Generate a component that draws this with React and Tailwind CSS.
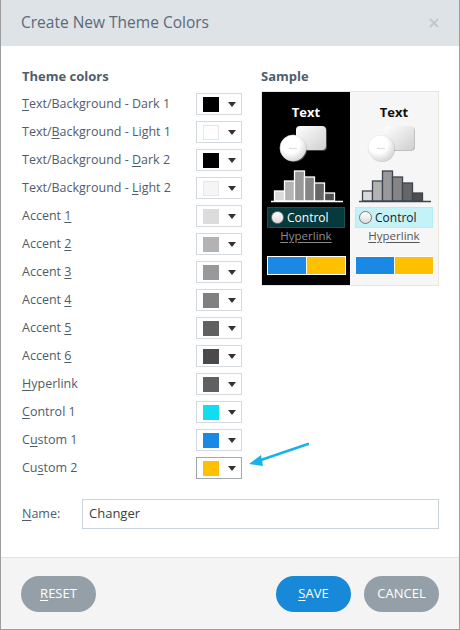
import React from 'react';

const font = { fontFamily: '"Open Sans", "Noto Sans", sans-serif' };

// label parts: [before, underlined, after]
const rows = [
  { label: ['', 'T', 'ext/Background - Dark 1'], color: '#000000' },
  { label: ['Text/', 'B', 'ackground - Light 1'], color: '#ffffff', edge: true },
  { label: ['Text/Background - ', 'D', 'ark 2'], color: '#000000' },
  { label: ['Text/Background - ', 'L', 'ight 2'], color: '#f5f5f5', edge: true },
  { label: ['Accent ', '1', ''], color: '#dcdcdc' },
  { label: ['Accent ', '2', ''], color: '#b3b3b3' },
  { label: ['Accent ', '3', ''], color: '#999999' },
  { label: ['Accent ', '4', ''], color: '#808080' },
  { label: ['Accent ', '5', ''], color: '#606060' },
  { label: ['Accent ', '6', ''], color: '#4a4a4a' },
  { label: ['', 'H', 'yperlink'], color: '#606060' },
  { label: ['', 'C', 'ontrol 1'], color: '#11dcf0' },
  { label: ['C', 'u', 'stom 1'], color: '#1a89e5' },
  { label: ['Cu', 's', 'tom 2'], color: '#ffc000', active: true },
];

const bars = [
  { h: 10, fill: '#d9d9d9' },
  { h: 20, fill: '#b3b3b3' },
  { h: 30, fill: '#999999' },
  { h: 24, fill: '#858585' },
  { h: 18, fill: '#666666' },
  { h: 8, fill: '#4d4d4d' },
];

function ColorPicker({ color, edge, active }) {
  return (
    <div
      className={`flex h-[22px] w-[46px] items-center bg-white pl-[6px] pr-[5px] border ${
        active ? 'border-[#a3a8ad]' : 'border-[#d3d9de]'
      }`}
    >
      <span
        className={`h-[15px] w-[16px] ${edge ? 'border border-[#e6e6e6]' : ''}`}
        style={{ background: color }}
      />
      <svg className="ml-auto" width="8" height="5" viewBox="0 0 8 5">
        <path d="M0 0h8L4 5z" fill="#333" />
      </svg>
    </div>
  );
}

function Shapes({ dark, id }) {
  const stroke = dark ? '#ffffff' : '#3d4650';
  return (
    <svg width="88" height="82" viewBox="0 0 88 82">
      <defs>
        <linearGradient id={`rg-${id}`} x1="0" y1="0" x2="1" y2="1">
          <stop offset="0" stopColor="#ffffff" />
          <stop offset="1" stopColor="#cfcfcf" />
        </linearGradient>
        <radialGradient id={`cg-${id}`} cx="0.4" cy="0.35" r="0.7">
          <stop offset="0.5" stopColor="#ffffff" />
          <stop offset="1" stopColor="#d4d4d4" />
        </radialGradient>
      </defs>
      <rect x="35" y="5" width="30" height="24" rx="4" fill="#8a8a8a" opacity="0.5" />
      <rect x="34" y="4" width="30" height="24" rx="4" fill={`url(#rg-${id})`} />
      <circle cx="32" cy="27" r="13" fill="#9a9a9a" opacity="0.45" />
      <circle cx="31" cy="26" r="13" fill={`url(#cg-${id})`} stroke="#e2e2e2" strokeWidth="0.6" />
      <path d="M27 26.5q1 -1 2 0t2 0t2 0t2 0" stroke="#c4c4c4" strokeWidth="0.7" fill="none" />
      {bars.map((b, i) => (
        <rect
          key={i}
          x={12.5 + i * 10}
          y={79 - b.h}
          width="10"
          height={b.h}
          fill={b.fill}
          stroke={stroke}
          strokeWidth="1.3"
        />
      ))}
      <line x1="9" y1="79.5" x2="81" y2="79.5" stroke={stroke} strokeWidth="1.5" />
    </svg>
  );
}

function SampleHalf({ dark }) {
  return (
    <div className={`flex w-[88px] flex-col items-center pt-[11px] ${dark ? 'bg-black' : 'bg-[#f6f6f6]'}`}>
      <div className={`text-[13px] font-bold leading-[18px] ${dark ? 'text-white' : 'text-[#111]'}`}>Text</div>
      <div className="mt-[1px]">
        <Shapes dark={dark} id={dark ? 'd' : 'l'} />
      </div>
      <div
        className={`mt-[3px] flex h-[21px] w-[78px] items-center gap-[3px] border pl-[3px] ${
          dark ? 'border-[#1f4e50] bg-[#073a3c] text-white' : 'border-[#b5ecf2] bg-[#c4f2f7] text-[#1a1a1a]'
        }`}
      >
        <span className="h-[13px] w-[13px] rounded-full border border-[#777] bg-gradient-to-b from-white to-[#dcdcdc]" />
        <span className="text-[12px] leading-none">Control</span>
      </div>
      <div
        className={`mt-[0px] text-[11.5px] leading-[16px] underline underline-offset-2 ${
          dark ? 'text-[#8c8c8c]' : 'text-[#575757]'
        }`}
      >
        Hyperlink
      </div>
      <div className="mt-[12px] flex h-[19px] w-[79px] border border-white bg-white">
        <span className="flex-1 bg-[#1a89e5]" />
        <span className="ml-[1px] flex-1 bg-[#ffc000]" />
      </div>
    </div>
  );
}

export default function App() {
  return (
    <div className="relative flex h-[630px] w-[460px] flex-col border-x border-b border-[#9d9d9d] bg-white" style={font}>
      {/* Header */}
      <div className="flex h-[46px] shrink-0 items-center justify-between bg-[#dee3e7] pl-[20px] pr-[20px]">
        <h1 className="text-[15.5px] text-[#5a6a79]">Create New Theme Colors</h1>
        <svg width="10" height="10" viewBox="0 0 10 10">
          <path d="M1 1l8 8M9 1l-8 8" stroke="#c3c8cc" strokeWidth="2" />
        </svg>
      </div>

      {/* Body */}
      <div className="flex flex-1 flex-col pl-[21px] pr-[20px] pt-[20px]">
        <div className="flex gap-[19px]">
          <div className="w-[222px]">
            <div className="text-[13px] font-bold leading-[20px] text-[#505d6b]">Theme colors</div>
            <div className="mt-[7px] flex flex-col gap-[6px]">
              {rows.map((r, i) => (
                <div key={i} className="flex h-[22px] items-center justify-between">
                  <span className="text-[12.5px] text-[#4f5d6b]">
                    {r.label[0]}
                    <span className="underline underline-offset-2">{r.label[1]}</span>
                    {r.label[2]}
                  </span>
                  <ColorPicker color={r.color} edge={r.edge} active={r.active} />
                </div>
              ))}
            </div>
          </div>
          <div className="flex-1">
            <div className="text-[13px] font-bold leading-[20px] text-[#505d6b]">Sample</div>
            <div className="mt-[5px] flex h-[195px] border border-[#ebe7da]">
              <SampleHalf dark />
              <SampleHalf />
            </div>
          </div>
        </div>

        <div className="mt-[20px] flex items-center">
          <label className="w-[60px] text-[12.5px] text-[#4f5d6b]">
            <span className="underline underline-offset-2">N</span>ame:
          </label>
          <div className="flex h-[30px] flex-1 items-center border border-[#cbd3da] px-[6px] text-[13px] text-[#3a3f44]">
            Changer
          </div>
        </div>
      </div>

      {/* Footer */}
      <div className="flex h-[72px] shrink-0 items-start border-t border-[#dce2e7] bg-[#f4f4f4] px-[20px] pt-[18px]">
        <button className="h-[36px] w-[75px] rounded-full bg-[#959fa7] text-[13px] text-white">
          <span className="underline underline-offset-2">R</span>ESET
        </button>
        <button className="ml-auto h-[36px] w-[75px] rounded-full bg-[#1888d9] text-[13px] text-white">
          <span className="underline underline-offset-2">S</span>AVE
        </button>
        <button className="ml-[13px] h-[36px] w-[75px] rounded-full bg-[#959fa7] text-[13px] text-white">
          CANCEL
        </button>
      </div>

      {/* annotation arrow */}
      <svg className="absolute left-[240px] top-[438px]" width="76" height="34" viewBox="0 0 76 34">
        <path d="M67 6L17 23" stroke="#18b2ea" strokeWidth="2.5" strokeLinecap="round" />
        <path d="M8 26L20 17L22 28z" fill="#18b2ea" />
      </svg>
    </div>
  );
}
